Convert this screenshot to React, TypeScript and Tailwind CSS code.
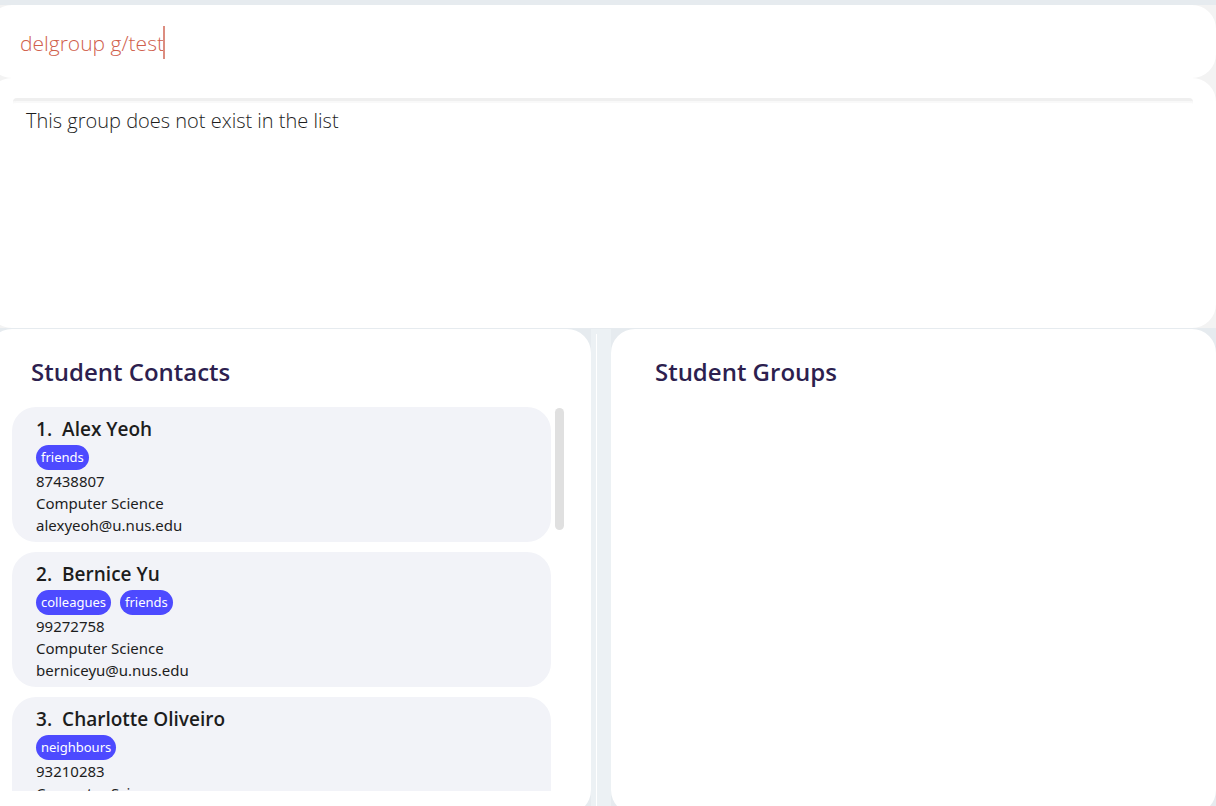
import { useState } from "react";

type Contact = {
  name: string;
  tags: string[];
  phone: string;
  major: string;
  email: string;
};

const contacts: Contact[] = [
  { name: "Alex Yeoh", tags: ["friends"], phone: "87438807", major: "Computer Science", email: "alexyeoh@u.nus.edu" },
  { name: "Bernice Yu", tags: ["colleagues", "friends"], phone: "99272758", major: "Computer Science", email: "berniceyu@u.nus.edu" },
  { name: "Charlotte Oliveiro", tags: ["neighbours"], phone: "93210283", major: "Computer Science", email: "charlotte@u.nus.edu" },
];

function ContactCard({ contact, index }: { contact: Contact; index: number }) {
  return (
    <li className="rounded-[24px] bg-[#f2f3f8] px-6 pt-2 pb-1.5 font-['Noto_Sans','Open_Sans',sans-serif] text-[15px] leading-[22px] text-[#1d1d1d]">
      <h3 className="flex gap-[10px] font-['Open_Sans','Noto_Sans',sans-serif] text-[19px] leading-7 font-semibold">
        <span>{index}.</span>
        <span>{contact.name}</span>
      </h3>
      <div className="mt-[2px] flex gap-[9px]">
        {contact.tags.map((tag) => (
          <span key={tag} className="rounded-full bg-[#4d4aff] px-[5px] text-[13px] leading-[25px] text-white">
            {tag}
          </span>
        ))}
      </div>
      <p>{contact.phone}</p>
      <p>{contact.major}</p>
      <p>{contact.email}</p>
    </li>
  );
}

export default function App() {
  const [command, setCommand] = useState("delgroup g/test");

  return (
    <div className="flex h-screen flex-col overflow-hidden bg-[#e6ebef] pt-[5px] font-['Open_Sans','Noto_Sans',sans-serif]">
      <div className="shrink-0 bg-[#f3f3f3]">
        <form className="-ml-3 flex h-[73px] items-center rounded-[24px] bg-white pt-[2px] pl-8" onSubmit={(e) => e.preventDefault()}>
          <input
            aria-label="Command"
            value={command}
            onChange={(e) => setCommand(e.target.value)}
            className="[field-sizing:content] text-[21px] leading-8 font-light text-[#d0604c] caret-transparent outline-none"
          />
          <span className="-ml-px h-[33px] w-[2px] bg-[#dc8d80]" />
        </form>
        <section className="-ml-3 h-[250px] rounded-[24px] bg-white pt-5 pr-[23px] pl-[25px]">
          <div className="rounded-sm border-t-[3px] border-[#efefef] shadow-[inset_0_2px_1px_#f9f9f9]">
            <p role="status" className="px-[13px] pt-1 text-[20px] leading-8 font-light text-[#1d1d1d]">
              This group does not exist in the list
            </p>
          </div>
        </section>
      </div>

      <main className="mt-px -mb-2 -ml-3 flex min-h-0 flex-1">
        <section className="flex w-[49.1%] shrink-0 flex-col rounded-[24px] bg-white pt-6 pr-[27px] pb-[23px] pl-6">
          <h2 className="px-[19px] text-[24px] leading-[38px] font-semibold text-[#2d1f4f]">Student Contacts</h2>
          <div className="mt-4 flex min-h-0 flex-1 gap-1">
            <ol className="flex flex-1 flex-col gap-[10px] overflow-y-auto [scrollbar-width:none]">
              {contacts.map((contact, i) => (
                <ContactCard key={contact.email} contact={contact} index={i + 1} />
              ))}
            </ol>
            <div className="mt-px h-[122px] w-[9px] rounded-full bg-[#e0e0e0]" />
          </div>
        </section>
        <div className="flex w-5 shrink-0 bg-[#ecf1f4] pt-[5px] pl-[5px]">
          <div className="w-px bg-white" />
        </div>
        <section className="min-w-0 flex-1 rounded-[24px] bg-white pt-6 pl-11">
          <h2 className="text-[24px] leading-[38px] font-semibold text-[#2d1f4f]">Student Groups</h2>
        </section>
      </main>
    </div>
  );
}
